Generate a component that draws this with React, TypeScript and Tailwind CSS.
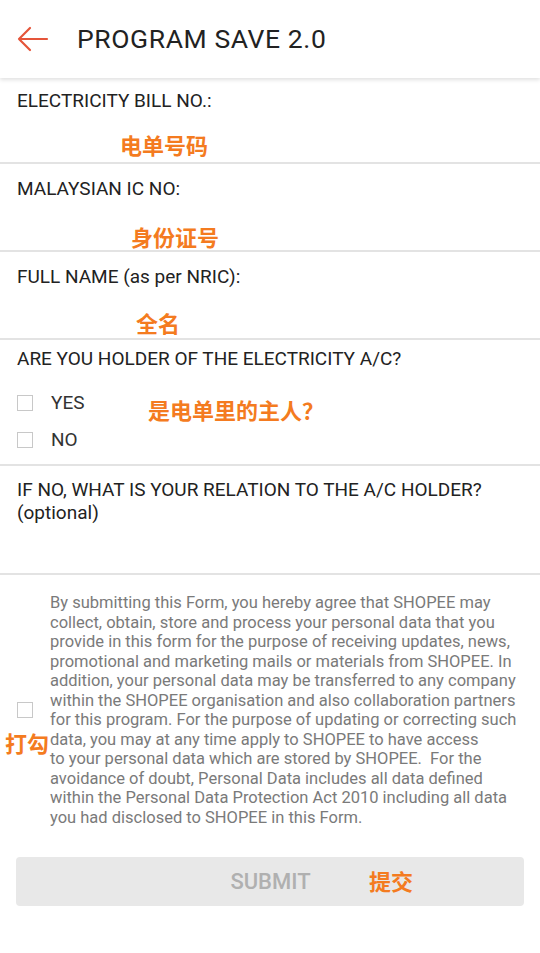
import React from "react";

const consentLines = [
  "By submitting this Form, you hereby agree that SHOPEE may",
  "collect, obtain, store and process your personal data that you",
  "provide in this form for the purpose of receiving updates, news,",
  "promotional and marketing mails or materials from SHOPEE. In",
  "addition, your personal data may be transferred to any company",
  "within the SHOPEE organisation and also collaboration partners",
  "for this program. For the purpose of updating or correcting such",
  "data, you may at any time apply to SHOPEE to have access",
  "to your personal data which are stored by SHOPEE.\u00a0 For the",
  "avoidance of doubt, Personal Data includes all data defined",
  "within the Personal Data Protection Act 2010 including all data",
  "you had disclosed to SHOPEE in this Form.",
];

function Box() {
  return <span className="block w-[16px] h-[16px] border border-[#c8c8c8] bg-white shrink-0" />;
}

function Note({ text, className }: { text: string; className: string }) {
  return (
    <span
      className={`absolute text-[22px] font-bold text-[#f47b20] leading-none whitespace-nowrap ${className}`}
      style={{ fontFamily: '"Noto Sans CJK SC", "Noto Sans", sans-serif' }}
    >
      {text}
    </span>
  );
}

export default function App() {
  return (
    <div
      className="w-[540px] h-[953px] bg-white relative overflow-hidden text-[#222]"
      style={{ fontFamily: 'Roboto, "Noto Sans", sans-serif' }}
    >
      {/* Header */}
      <div className="h-[78px] flex items-center shadow-[0_2px_4px_rgba(0,0,0,0.12)] relative z-10 bg-white">
        <svg width="32" height="26" viewBox="0 0 32 26" className="ml-[17px]" fill="none" stroke="#e5553a" strokeWidth="2.2" strokeLinecap="round" strokeLinejoin="round">
          <path d="M30 13H2M13 2L2 13l11 11" />
        </svg>
        <span className="ml-[28px] text-[26.5px] tracking-[0.6px] text-[#222]">PROGRAM SAVE 2.0</span>
      </div>

      {/* Fields */}
      <div className="h-[86px] border-b-2 border-[#e3e3e3] px-[17px] pt-[12px] relative">
        <div className="text-[19px] leading-[22px]">ELECTRICITY BILL NO.:</div>
        <Note text="电单号码" className="left-[120px] top-[55px]" />
      </div>
      <div className="h-[88px] border-b-2 border-[#e3e3e3] px-[17px] pt-[14px] relative">
        <div className="text-[19px] leading-[22px]">MALAYSIAN IC NO:</div>
        <Note text="身份证号" className="left-[131px] top-[61px]" />
      </div>
      <div className="h-[88px] border-b-2 border-[#e3e3e3] px-[17px] pt-[14px] relative">
        <div className="text-[19px] leading-[22px]">FULL NAME (as per NRIC):</div>
        <Note text="全名" className="left-[136px] top-[59px]" />
      </div>
      <div className="h-[126px] border-b-2 border-[#e3e3e3] px-[17px] pt-[8px] relative">
        <div className="text-[19px] leading-[22px]">ARE YOU HOLDER OF THE ELECTRICITY A/C?</div>
        <div className="mt-[24px] flex flex-col gap-[19px]">
          <div className="flex items-center h-[18px]">
            <Box />
            <span className="ml-[18px] text-[19px] text-[#333]">YES</span>
          </div>
          <div className="flex items-center h-[18px]">
            <Box />
            <span className="ml-[18px] text-[19px] text-[#333]">NO</span>
          </div>
        </div>
        <Note text="是电单里的主人？" className="left-[148px] top-[58px]" />
      </div>
      <div className="h-[109px] border-b-2 border-[#e3e3e3] px-[17px] pt-[12px]">
        <div className="text-[19px] leading-[23px]">
          IF NO, WHAT IS YOUR RELATION TO THE A/C HOLDER?
          <br />
          (optional)
        </div>
      </div>

      {/* Consent */}
      <div className="flex items-center px-[17px] pt-[18px] relative">
        <Box />
        <div className="ml-[17px] text-[16.5px] leading-[19.5px] text-[#7a7a7a]">
          {consentLines.map((l, i) => (
            <div key={i} className="whitespace-nowrap">{l}</div>
          ))}
        </div>
        <Note text="打勾" className="left-[5px] top-[156px]" />
      </div>

      {/* Submit */}
      <div className="px-[16px] mt-[30px]">
        <div className="h-[49px] rounded-[4px] bg-[#e8e8e8] flex items-center justify-center relative">
          <span className="text-[22px] text-[#b0b0b0] font-medium ml-[1px]">SUBMIT</span>
          <Note text="提交" className="left-[353px] top-[12px]" />
        </div>
      </div>
    </div>
  );
}
